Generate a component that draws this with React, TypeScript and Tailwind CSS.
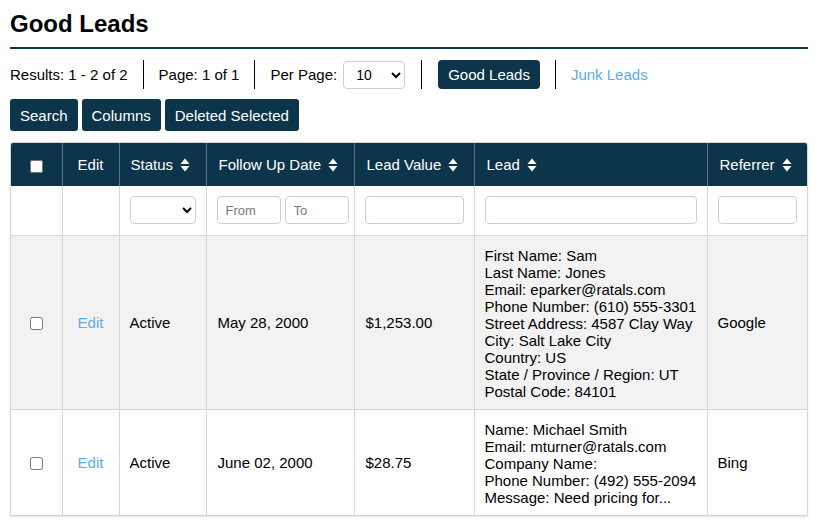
const NAVY = '#0c344a';

function SortIcon() {
  return (
    <svg width="10" height="14" viewBox="0 0 10 14" className="inline-block ml-[7px] -mt-[2px] align-middle">
      <path d="M5 0.5 L9.5 6 L0.5 6 Z" fill="#fff" />
      <path d="M5 13.5 L9.5 8 L0.5 8 Z" fill="#fff" />
    </svg>
  );
}

const leads = [
  {
    status: 'Active',
    date: 'May 28, 2000',
    value: '$1,253.00',
    referrer: 'Google',
    lines: [
      'First Name: Sam',
      'Last Name: Jones',
      'Email: eparker@ratals.com',
      'Phone Number: (610) 555-3301',
      'Street Address: 4587 Clay Way',
      'City: Salt Lake City',
      'Country: US',
      'State / Province / Region: UT',
      'Postal Code: 84101',
    ],
  },
  {
    status: 'Active',
    date: 'June 02, 2000',
    value: '$28.75',
    referrer: 'Bing',
    lines: [
      'Name: Michael Smith',
      'Email: mturner@ratals.com',
      'Company Name:',
      'Phone Number: (492) 555-2094',
      'Message: Need pricing for...',
    ],
  },
];

export default function App() {
  const inputCls = 'w-full h-[28px] border border-[#cfcfcf] rounded-[4px] bg-white px-[8px] text-[13px] outline-none';

  return (
    <div className="min-h-screen bg-white px-[10px] text-[15px] leading-[17px] text-black" style={{ fontFamily: '"Liberation Sans", Arial, sans-serif' }}>
      {/* Title */}
      <h1 className="pt-[10px] pb-[10px] text-[24px] leading-[27px] font-bold border-b-2" style={{ borderColor: NAVY }}>
        Good Leads
      </h1>

      {/* Toolbar */}
      <div className="flex items-center h-[29px] mt-[11px]">
        <span>Results: 1 - 2 of 2</span>
        <div className="w-px h-[29px] bg-black mx-[15px]" />
        <span>Page: 1 of 1</span>
        <div className="w-px h-[29px] bg-black mx-[15px]" />
        <span>Per Page:</span>
        <select className="ml-[6px] w-[62px] h-[28px] border border-[#cfcfcf] rounded-[4px] bg-white pl-[8px] text-[14px]">
          <option>10</option>
        </select>
        <div className="w-px h-[29px] bg-black mx-[16px]" />
        <button className="h-[29px] px-[10px] rounded-[4px] text-white" style={{ backgroundColor: NAVY }}>
          Good Leads
        </button>
        <div className="w-px h-[29px] bg-black mx-[15px]" />
        <a className="text-[#5aade6]">Junk Leads</a>
      </div>

      {/* Actions */}
      <div className="flex gap-[4px] mt-[10px]">
        {['Search', 'Columns', 'Deleted Selected'].map((b) => (
          <button key={b} className="h-[32px] px-[10px] rounded-[3px] text-white" style={{ backgroundColor: NAVY }}>
            {b}
          </button>
        ))}
      </div>

      {/* Table */}
      <div className="mt-[11px] border border-[#d6d6d6] rounded-t-[3px] overflow-hidden shadow-[0_1px_2px_rgba(0,0,0,0.12)]">
        <table className="w-full table-fixed border-collapse">
          <colgroup>
            <col className="w-[51px]" />
            <col className="w-[57px]" />
            <col className="w-[87px]" />
            <col className="w-[148px]" />
            <col className="w-[120px]" />
            <col className="w-[233px]" />
            <col />
          </colgroup>
          <thead>
            <tr className="h-[43px] text-white" style={{ backgroundColor: NAVY }}>
              <th className="font-normal text-center">
                <input type="checkbox" className="w-[13px] h-[13px] align-middle" />
              </th>
              <th className="font-normal text-center border-l border-[#5d7282]">Edit</th>
              <th className="font-normal text-left px-[11px] border-l border-[#5d7282] whitespace-nowrap">Status<SortIcon /></th>
              <th className="font-normal text-left px-[12px] border-l border-[#5d7282] whitespace-nowrap">Follow Up Date<SortIcon /></th>
              <th className="font-normal text-left px-[12px] border-l border-[#5d7282] whitespace-nowrap">Lead Value<SortIcon /></th>
              <th className="font-normal text-left px-[12px] border-l border-[#5d7282] whitespace-nowrap">Lead<SortIcon /></th>
              <th className="font-normal text-left px-[12px] border-l border-[#5d7282] whitespace-nowrap">Referrer<SortIcon /></th>
            </tr>
          </thead>
          <tbody>
            <tr className="h-[49px] bg-white">
              <td />
              <td className="border-l border-[#d6d6d6]" />
              <td className="border-l border-[#d6d6d6] px-[10px]">
                <select className="w-full h-[28px] border border-[#cfcfcf] rounded-[4px] bg-white" />
              </td>
              <td className="border-l border-[#d6d6d6] pl-[10px] pr-[5px]">
                <div className="flex gap-[4px]">
                  <input className={inputCls + ' placeholder:text-[#777]'} placeholder="From" />
                  <input className={inputCls + ' placeholder:text-[#777]'} placeholder="To" />
                </div>
              </td>
              <td className="border-l border-[#d6d6d6] px-[10px]"><input className={inputCls} /></td>
              <td className="border-l border-[#d6d6d6] px-[10px]"><input className={inputCls} /></td>
              <td className="border-l border-[#d6d6d6] px-[10px]"><input className={inputCls} /></td>
            </tr>
            {leads.map((l, i) => (
              <tr key={i} className={i % 2 === 0 ? 'bg-[#f2f2f2]' : 'bg-white'}>
                <td className="border-t border-[#d6d6d6] text-center align-middle">
                  <input type="checkbox" className="w-[13px] h-[13px] align-middle" />
                </td>
                <td className="border-t border-l border-[#d6d6d6] text-center">
                  <a className="text-[#5aade6]">Edit</a>
                </td>
                <td className="border-t border-l border-[#d6d6d6] px-[10px]">{l.status}</td>
                <td className="border-t border-l border-[#d6d6d6] px-[11px]">{l.date}</td>
                <td className="border-t border-l border-[#d6d6d6] px-[11px]">{l.value}</td>
                <td className="border-t border-l border-[#d6d6d6] px-[10px] pt-[11px] pb-[9px]">
                  {l.lines.map((t) => (
                    <div key={t}>{t}</div>
                  ))}
                </td>
                <td className="border-t border-l border-[#d6d6d6] px-[10px]">{l.referrer}</td>
              </tr>
            ))}
          </tbody>
        </table>
      </div>
    </div>
  );
}
